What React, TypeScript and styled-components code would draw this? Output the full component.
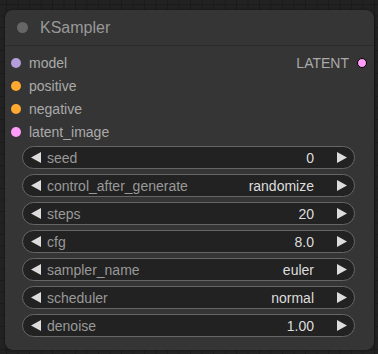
import React from "react";
import styled, { createGlobalStyle } from "styled-components";

const Global = createGlobalStyle`
  html, body {
    margin: 0;
    padding: 0;
    width: 378px;
    height: 354px;
    overflow: hidden;
    background-color: #222;
    background-image:
      linear-gradient(to right, #1b1b1b 1px, transparent 1px),
      linear-gradient(to bottom, #1b1b1b 1px, transparent 1px);
    background-size: 11.5px 11.5px;
    background-position: 6px 4px;
    font-family: "Liberation Sans", Arial, sans-serif;
  }
  #root { padding: 10px 0 0 5px; }
`;

const Node = styled.div`
  width: 369px;
  height: 340px;
  box-sizing: border-box;
  background: #353535;
  border-radius: 8px;
  box-shadow: 0 0 3px rgba(0, 0, 0, 0.5);
  display: flex;
  flex-direction: column;
`;

const Title = styled.div`
  height: 35px;
  display: flex;
  align-items: center;
  gap: 12px;
  padding-left: 12px;
  border-bottom: 1px solid #2b2b2b;
  color: #999;
  font-size: 16px;
`;

const TitleDot = styled.span`
  width: 11px;
  height: 11px;
  border-radius: 50%;
  background: #666;
`;

const Body = styled.div`
  display: flex;
  flex-direction: column;
  padding: 5px 19px 0 17px;
`;

const SlotRow = styled.div`
  height: 23px;
  display: flex;
  align-items: center;
  justify-content: space-between;
  margin: 0 -12px 0 -11px;
  font-size: 14px;
  color: #aaa;
`;

const Slot = styled.div`
  display: flex;
  align-items: center;
  gap: 8px;
`;

const Dot = styled.span<{ $c: string; $out?: boolean }>`
  width: 10px;
  height: 10px;
  box-sizing: border-box;
  border-radius: 50%;
  background: ${(p) => p.$c};
  border: ${(p) => (p.$out ? "1px solid #000" : "none")};
`;

const Widgets = styled.div`
  display: flex;
  flex-direction: column;
  gap: 5px;
  margin-top: 3px;
`;

const Widget = styled.div`
  height: 23px;
  box-sizing: border-box;
  border: 1px solid #666;
  border-radius: 12px;
  background: #222;
  display: flex;
  align-items: center;
  padding: 0 7px 0 8px;
  font-size: 14px;
`;

const Arrow = styled.svg`
  width: 11px;
  height: 11px;
  flex: none;
`;

const Label = styled.span`
  color: #999;
  margin-left: 5px;
  flex: 1;
`;

const Value = styled.span`
  color: #ddd;
  margin-right: 22px;
`;

const Left = () => (
  <Arrow viewBox="0 0 11 11">
    <polygon points="0,5.5 10,0 10,11" fill="#ddd" />
  </Arrow>
);
const Right = () => (
  <Arrow viewBox="0 0 11 11">
    <polygon points="11,5.5 1,0 1,11" fill="#ddd" />
  </Arrow>
);

const widgets: [string, string][] = [
  ["seed", "0"],
  ["control_after_generate", "randomize"],
  ["steps", "20"],
  ["cfg", "8.0"],
  ["sampler_name", "euler"],
  ["scheduler", "normal"],
  ["denoise", "1.00"],
];

export default function App() {
  return (
    <>
      <Global />
      <Node>
        <Title>
          <TitleDot />
          KSampler
        </Title>
        <Body>
          <SlotRow>
            <Slot>
              <Dot $c="#b39ddb" />
              model
            </Slot>
            <Slot>
              LATENT
              <Dot $c="#ff9cf9" $out />
            </Slot>
          </SlotRow>
          <SlotRow>
            <Slot>
              <Dot $c="#ffa931" />
              positive
            </Slot>
          </SlotRow>
          <SlotRow>
            <Slot>
              <Dot $c="#ffa931" />
              negative
            </Slot>
          </SlotRow>
          <SlotRow>
            <Slot>
              <Dot $c="#ff9cf9" />
              latent_image
            </Slot>
          </SlotRow>
          <Widgets>
            {widgets.map(([l, v]) => (
              <Widget key={l}>
                <Left />
                <Label>{l}</Label>
                <Value>{v}</Value>
                <Right />
              </Widget>
            ))}
          </Widgets>
        </Body>
      </Node>
    </>
  );
}
